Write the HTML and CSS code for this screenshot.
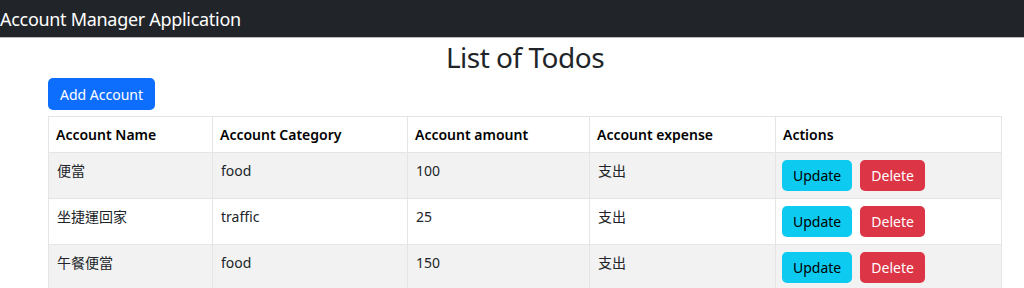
FILE: index.html
```html
<!DOCTYPE html>
<html lang="en">
<head>
    <meta charset="UTF-8">
    <meta name="viewport" content="width=device-width, initial-scale=1.0">
    <title>Account Manager Application</title>
    <link rel="stylesheet" href="styles.css">
</head>
<body>
    <nav class="navbar">
        <span class="navbar-brand">Account Manager Application</span>
    </nav>

    <div class="container">
        <h2 class="title">List of Todos</h2>
        <div class="toolbar">
            <button class="btn btn-primary">Add Account</button>
        </div>

        <table class="table">
            <thead>
                <tr>
                    <th class="col-name">Account Name</th>
                    <th class="col-category">Account Category</th>
                    <th class="col-amount">Account amount</th>
                    <th class="col-expense">Account expense</th>
                    <th>Actions</th>
                </tr>
            </thead>
            <tbody>
                <tr>
                    <td>便當</td>
                    <td>food</td>
                    <td>100</td>
                    <td>支出</td>
                    <td>
                        <div class="actions">
                            <button class="btn btn-info">Update</button>
                            <button class="btn btn-danger">Delete</button>
                        </div>
                    </td>
                </tr>
                <tr>
                    <td>坐捷運回家</td>
                    <td>traffic</td>
                    <td>25</td>
                    <td>支出</td>
                    <td>
                        <div class="actions">
                            <button class="btn btn-info">Update</button>
                            <button class="btn btn-danger">Delete</button>
                        </div>
                    </td>
                </tr>
                <tr>
                    <td>午餐便當</td>
                    <td>food</td>
                    <td>150</td>
                    <td>支出</td>
                    <td>
                        <div class="actions">
                            <button class="btn btn-info">Update</button>
                            <button class="btn btn-danger">Delete</button>
                        </div>
                    </td>
                </tr>
            </tbody>
        </table>
    </div>
</body>
</html>
```

FILE: styles.css
```css
body {
    font-family: 'Noto Sans', 'Noto Sans CJK TC', sans-serif;
    font-size: 14px;
    color: #212529;
    margin: 0;
    padding: 0;
    background-color: #fff;
}

.navbar {
    background-color: #212529;
    height: 38px;
    display: flex;
    align-items: center;
    border-bottom: 1px solid #b9bbbd;
    box-sizing: border-box;
}

.navbar-brand {
    color: #fff;
    font-size: 18px;
    letter-spacing: -0.3px;
    line-height: 24px;
}

.container {
    padding: 0 22px 0 48px;
}

.title {
    text-align: center;
    font-size: 28px;
    font-weight: 400;
    letter-spacing: -0.5px;
    line-height: 36px;
    margin: 1px 0 3px 0;
}

.toolbar {
    display: flex;
}

.btn {
    font-family: inherit;
    font-size: 14px;
    line-height: 21px;
    padding: 4px 10px;
    border: 1px solid transparent;
    border-radius: 5px;
    cursor: pointer;
}

.btn-primary {
    background-color: #0d6efd;
    color: #fff;
    padding: 5px 11px 4px 11px;
}

.btn-info {
    background-color: #0dcaf0;
    color: #000;
}

.btn-danger {
    background-color: #dc3545;
    color: #fff;
}

.actions {
    display: flex;
    gap: 8px;
}

.table {
    width: 100%;
    margin-top: 6px;
    border-collapse: collapse;
    table-layout: fixed;
}

.table th,
.table td {
    box-sizing: border-box;
    border: 1px solid #e3e6e9;
    padding: 7px 7px;
    text-align: left;
    vertical-align: top;
    line-height: 21px;
    white-space: nowrap;
}

.table th {
    font-weight: 600;
    color: #000;
}

.table td {
    padding-left: 8px;
}

.table td:last-child {
    padding-left: 6px;
}

.table tbody tr:nth-child(odd) {
    background-color: #f2f2f2;
}

.col-name { width: 164px; }
.col-category { width: 195px; }
.col-amount { width: 182px; }
.col-expense { width: 186px; }
```
